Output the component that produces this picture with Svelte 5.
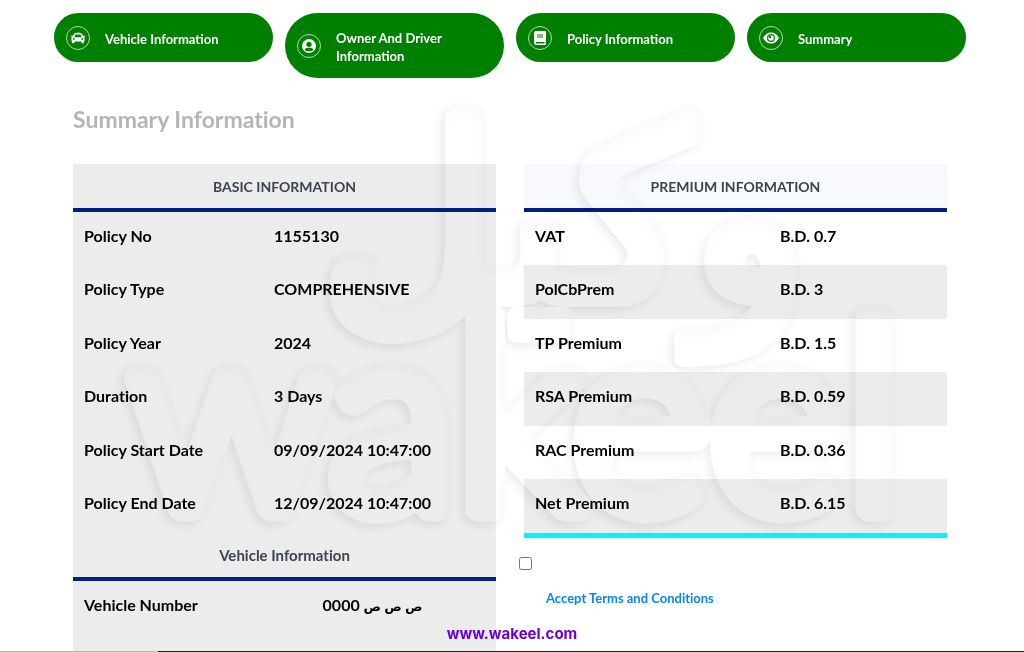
<!--
  Summary: last step of the motor policy wizard, with policy details,
  premium breakdown and the terms checkbox.
-->
<script>
  const steps = [
    { label: 'Vehicle Information', icon: 'car' },
    { label: 'Owner And Driver Information', icon: 'user' },
    { label: 'Policy Information', icon: 'book' },
    { label: 'Summary', icon: 'eye' },
  ];

  const basic = [
    ['Policy No', '1155130'],
    ['Policy Type', 'COMPREHENSIVE'],
    ['Policy Year', '2024'],
    ['Duration', '3 Days'],
    ['Policy Start Date', '09/09/2024 10:47:00'],
    ['Policy End Date', '12/09/2024 10:47:00'],
  ];

  const premium = [
    ['VAT', 'B.D. 0.7'],
    ['PolCbPrem', 'B.D. 3'],
    ['TP Premium', 'B.D. 1.5'],
    ['RSA Premium', 'B.D. 0.59'],
    ['RAC Premium', 'B.D. 0.36'],
    ['Net Premium', 'B.D. 6.15'],
  ];

  let accepted = $state(false);
</script>

<div class="page">
  <nav class="steps">
    {#each steps as step}
      <button type="button" class="step">
        <span class="step-icon">
          {#if step.icon === 'car'}
            <svg width="14" height="14" viewBox="0 0 512 512">
              <path fill="currentColor" fill-rule="evenodd" d="M499 176h-60l-9-22C411 108 368 64 310 64H202c-58 0-101 44-120 90l-9 22H13c-8 0-14 7-12 15l6 24c1 5 6 9 12 9h20c-14 12-23 29-23 48v48c0 16 6 31 16 42v54c0 18 14 32 32 32h32c18 0 32-14 32-32v-32h256v32c0 18 14 32 32 32h32c18 0 32-14 32-32v-54c10-11 16-26 16-42v-48c0-19-9-36-23-48h20c6 0 11-4 12-9l6-24c2-8-4-15-12-15zM142 178c10-25 33-50 60-50h108c27 0 50 25 60 50l18 46H124zM96 320c-19 0-32-13-32-32s13-32 32-32 48 29 48 48-29 16-48 16zm320 0c-19 0-48 3-48-16s29-48 48-48 32 13 32 32-13 32-32 32z" />
            </svg>
          {:else if step.icon === 'user'}
            <svg width="14" height="14" viewBox="0 0 16 16">
              <circle cx="8" cy="8" r="8" fill="currentColor" />
              <circle cx="8" cy="6" r="3" fill="green" />
              <path fill="green" d="M3 12c1-2 3-2 5-2s4 0 5 2c-1 2-3 2-5 2s-4 0-5-2z" />
            </svg>
          {:else if step.icon === 'book'}
            <svg width="14" height="14" viewBox="0 0 14 14">
              <path fill="currentColor" fill-rule="evenodd" d="M3 0h10v10.500q-1 1 0 2.500v1H3q-2-.3-2-2V2q0-2 2-2zm1 3.500v1h6v-1zm0 2v1h6v-1zM3 11v1.500h8.500V11z" />
            </svg>
          {:else}
            <svg width="16" height="14" viewBox="0 0 16 14">
              <path fill="currentColor" fill-rule="evenodd" d="M0 7q3-5.500 8-5.500T16 7q-3 5.500-8 5.500T0 7zm8-4a4 4 0 1 0 0 8 4 4 0 0 0 0-8z" />
              <circle cx="8" cy="7" r="2.800" fill="currentColor" />
              <circle cx="7" cy="6" r="1.200" fill="green" />
            </svg>
          {/if}
        </span>
        <span class="step-label">{step.label}</span>
      </button>
    {/each}
  </nav>

  <main>
    <h1>Summary Information</h1>

    <div class="columns">
      <table class="details">
        <colgroup><col class="col-name" /><col /></colgroup>
        <thead>
          <tr><th colspan="2">BASIC INFORMATION</th></tr>
        </thead>
        <tbody>
          {#each basic as [name, value]}
            <tr><td class="name">{name}</td><td>{value}</td></tr>
          {/each}
        </tbody>
        <tbody>
          <tr><th colspan="2">Vehicle Information</th></tr>
        </tbody>
        <tbody>
          <tr class="plate">
            <td class="name">Vehicle Number</td>
            <td class="number">0000 <span lang="ar">ص ص ص</span></td>
          </tr>
        </tbody>
      </table>

      <section>
        <table class="premium">
          <colgroup><col class="col-name" /><col /></colgroup>
          <thead>
            <tr><th colspan="2">PREMIUM INFORMATION</th></tr>
          </thead>
          <tbody>
            {#each premium as [name, value]}
              <tr><td class="name">{name}</td><td>{value}</td></tr>
            {/each}
          </tbody>
        </table>

        <div class="terms">
          <input id="accept" type="checkbox" bind:checked={accepted} />
          <label for="accept"><a href="#terms">Accept Terms and Conditions</a></label>
        </div>
      </section>
    </div>
  </main>

  <svg class="watermark" viewBox="0 0 1024 652" aria-hidden="true">
    <defs>
      <filter id="emboss" x="-10%" y="-10%" width="120%" height="120%">
        <feDropShadow in="SourceGraphic" dx="-4" dy="4" stdDeviation="4" flood-color="#000" flood-opacity="0.07" result="raised" />
        <feGaussianBlur in="SourceAlpha" stdDeviation="6" />
        <feOffset dx="-3" dy="6" result="moved" />
        <feComposite in="SourceAlpha" in2="moved" operator="out" result="edge" />
        <feFlood flood-color="#000" flood-opacity="0.05" />
        <feComposite in2="edge" operator="in" result="inner" />
        <feMerge>
          <feMergeNode in="raised" />
          <feMergeNode in="inner" />
        </feMerge>
      </filter>
    </defs>
    <g filter="url(#emboss)">
      <text class="arabic" x="566" y="298">وكيل</text>
      <text class="latin" x="518" y="508">wakeel</text>
    </g>
  </svg>

  <footer><a href="#home">www.wakeel.com</a></footer>
</div>

<style>
  :global(body) {
    margin: 0;
    background: #fff;
  }

  .page {
    position: relative;
    box-sizing: border-box;
    height: 100vh;
    overflow: hidden;
    padding: 13px 58px 0 54px;
    font-family: Lato, "DejaVu Sans", sans-serif;
    font-size: 16px;
    font-weight: 700;
    font-variant-ligatures: none;
    color: #000;
  }

  .steps {
    display: grid;
    grid-template-columns: repeat(4, 1fr);
    align-items: start;
    gap: 12px;
    height: 65px;
  }

  .step {
    display: flex;
    align-items: center;
    gap: 15px;
    min-height: 49px;
    padding: 12px 48px 12px 12px;
    border: 0;
    border-radius: 33px;
    background: green;
    color: #fff;
    font: 700 13px/18px Lato, sans-serif;
    text-align: left;
  }

  .step-icon {
    display: flex;
    flex: 0 0 auto;
    align-items: center;
    justify-content: center;
    box-sizing: border-box;
    width: 24px;
    height: 24px;
    border: 1px solid #b3dab3;
    border-radius: 50%;
  }

  .step-label {
    padding: 4px 0 1px;
  }

  main {
    padding: 0 19px;
  }

  h1 {
    margin: 26px 0 30px;
    font-size: 23px;
    line-height: 30px;
    color: #b5b5b5;
  }

  .columns {
    display: grid;
    grid-template-columns: 1fr 1fr;
    align-items: start;
    gap: 28px;
  }

  table {
    width: 100%;
    table-layout: fixed;
    border-spacing: 0;
  }

  th {
    box-sizing: border-box;
    height: 48px;
    padding: 0;
    border-bottom: 4px solid #00207f;
    font-size: 15px;
    font-weight: 700;
    color: #3c4450;
  }

  thead th {
    font-size: 14px;
  }

  td {
    box-sizing: border-box;
    height: 53px;
    padding: 14px 11px 0 0;
    line-height: 20px;
    vertical-align: top;
  }

  tr:nth-child(even) td {
    height: 54px;
  }

  td.name {
    padding-left: 11px;
  }

  .details {
    background: #ececec;
  }

  .details .col-name {
    width: 201px;
  }

  .premium .col-name {
    width: 256px;
  }

  .plate td {
    height: 90px;
  }

  .plate .number {
    padding-right: 25px;
    text-align: center;
  }

  .number span {
    font-size: 13px;
  }

  .premium th {
    background: #f8f9fc;
  }

  .premium {
    border-bottom: 5px solid #00f5ff;
  }

  .premium tr:nth-child(even) td {
    background: #ececec;
  }

  .terms {
    display: flex;
    flex-direction: column;
    align-items: flex-start;
    gap: 18px;
    padding-top: 19px;
    font-size: 13px;
  }

  .terms input {
    width: 13px;
    height: 13px;
    margin: 0 0 0 -5px;
  }

  .terms label {
    padding-left: 22px;
    line-height: 20px;
  }

  .terms a {
    color: #0a84f5;
    text-decoration: none;
  }

  .watermark {
    position: absolute;
    inset: 0;
    width: 100%;
    pointer-events: none;
    mix-blend-mode: multiply;
  }

  .watermark text {
    fill: #fff;
    stroke: #fff;
    stroke-linejoin: round;
    text-anchor: middle;
  }

  .arabic {
    font: 400 242px "DejaVu Sans", sans-serif;
    font-variant-ligatures: normal;
    stroke-width: 18px;
  }

  .latin {
    font: 300 262px Lato, sans-serif;
    stroke-width: 27px;
  }

  footer {
    position: absolute;
    right: 0;
    bottom: 0;
    left: 0;
    padding-bottom: 8px;
    background: linear-gradient(to right, #b8b8b8 158px, #222 158px) bottom / 100% 1px no-repeat;
    font: 700 15px/20px Inter, sans-serif;
    text-align: center;
  }

  footer a {
    color: #6a00d8;
    text-decoration: none;
  }
</style>
